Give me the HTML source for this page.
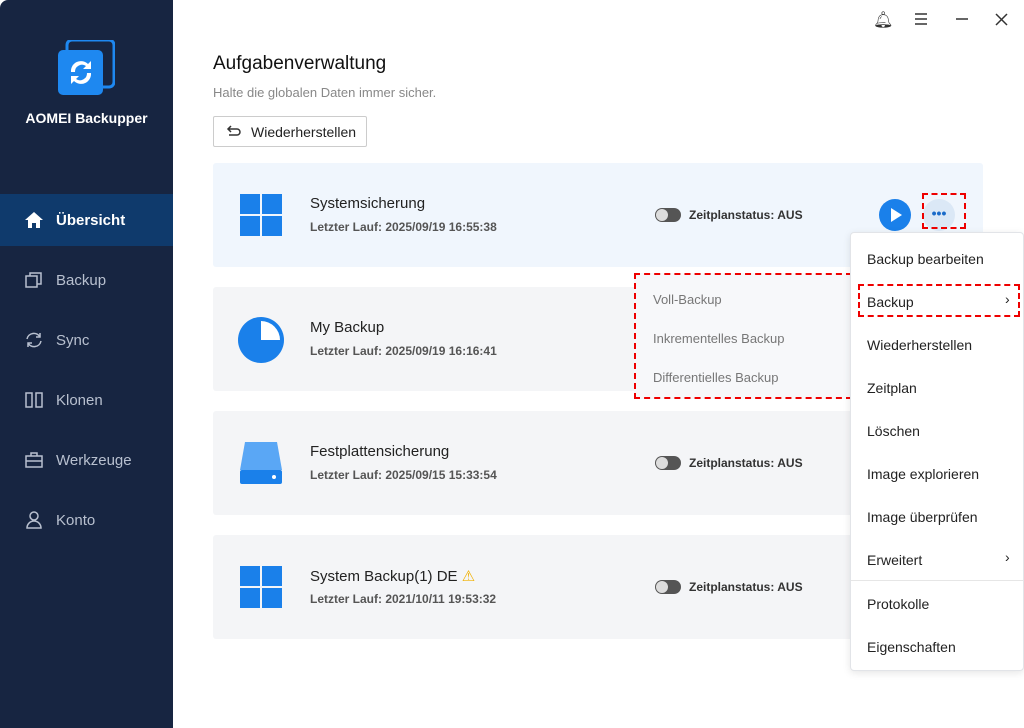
<!DOCTYPE html><html><head><meta charset="utf-8"><style>
*{margin:0;padding:0;box-sizing:border-box}
body{width:1024px;height:728px;background:#fff;font-family:"Liberation Sans",sans-serif;position:relative;overflow:hidden;color:#222}
.sb{position:absolute;left:0;top:0;width:173px;height:728px;background:#172541;border-radius:8px 0 0 0}
.nav{position:absolute;left:0;width:173px;height:52px;color:#b8c0cf;font-size:15px;display:flex;align-items:center;padding-left:24px}
.nav svg{margin-right:12px}
.nav.act{background:#0f3a6c;color:#fff;font-weight:bold}
.a{position:absolute}
.card{position:absolute;left:213px;width:770px;height:104px;background:#f4f5f7;border-radius:3px}
.t{position:absolute;left:97px;top:32px;font-size:15px;color:#222}
.s{position:absolute;left:97px;top:57px;font-size:12px;color:#555;font-weight:bold}
.tg{position:absolute;left:442px;font-size:12px;color:#333;font-weight:bold;display:flex;align-items:center}
.tg i{display:inline-block;width:26px;height:14px;border-radius:7px;background:#555;margin-right:8px;position:relative}
.tg i:after{content:"";position:absolute;left:1px;top:1px;width:12px;height:12px;border-radius:6px;background:#ddd}
.menu{position:absolute;left:850px;top:232px;width:174px;height:439px;background:#fff;border:1px solid #e2e4e8;border-radius:4px;box-shadow:0 2px 8px rgba(0,0,0,.1)}
.mi{position:absolute;left:16px;font-size:14px;color:#222}
.sub{position:absolute;left:634px;top:273px;width:218px;height:126px;background:#f7f8fa;border:2px dashed #e00}
.sub div{position:absolute;left:17px;font-size:13px;color:#777}
</style></head><body>
<div class="sb"></div>
<svg class="a" style="left:57px;top:40px" width="58" height="58"><rect x="10" y="0" width="47" height="47" rx="5" fill="none" stroke="#1e88f0" stroke-width="3"/><rect x="1" y="10" width="45" height="45" rx="5" fill="#1e88f0"/><path d="M14 32a10 10 0 0 1 17-8l3-3v8h-8l3-3a7 7 0 0 0-11 6z M34 33a10 10 0 0 1-17 8l-3 3v-8h8l-3 3a7 7 0 0 0 11-6z" fill="#fff"/></svg>
<div class="a" style="left:0;width:173px;top:110px;text-align:center;color:#fff;font-weight:bold;font-size:14px">AOMEI Backupper</div>
<div class="nav act" style="top:194px"><svg width="20" height="20"><path d="M10 2L1 10h3v8h4v-5h4v5h4v-8h3z" fill="#fff"/></svg>Übersicht</div>
<div class="nav" style="top:254px"><svg width="20" height="20" fill="none" stroke="#b8c0cf" stroke-width="1.5"><rect x="2" y="6" width="11" height="11"/><path d="M6 6V3h11v11h-4"/></svg>Backup</div>
<div class="nav" style="top:314px"><svg width="20" height="20" fill="none" stroke="#b8c0cf" stroke-width="1.5"><path d="M3 9a7 7 0 0 1 13-2M17 11a7 7 0 0 1-13 2M16 3v4h-4M4 17v-4h4"/></svg>Sync</div>
<div class="nav" style="top:374px"><svg width="20" height="20" fill="none" stroke="#b8c0cf" stroke-width="1.5"><rect x="2" y="3" width="6" height="14"/><rect x="12" y="3" width="6" height="14"/></svg>Klonen</div>
<div class="nav" style="top:434px"><svg width="20" height="20" fill="none" stroke="#b8c0cf" stroke-width="1.5"><rect x="2" y="6" width="16" height="11"/><path d="M7 6V3h6v3M2 11h16"/></svg>Werkzeuge</div>
<div class="nav" style="top:494px"><svg width="20" height="20" fill="none" stroke="#b8c0cf" stroke-width="1.5"><circle cx="10" cy="6" r="4"/><path d="M3 18a7 7 0 0 1 14 0z"/></svg>Konto</div>
<div class="a" style="left:873px;top:10px;font-size:16px;color:#333">🔔︎</div>
<svg class="a" style="left:914px;top:13px" width="14" height="12" stroke="#333" stroke-width="1.5"><path d="M1 1h12M1 6h12M1 11h12"/></svg>
<svg class="a" style="left:955px;top:13px" width="14" height="12" stroke="#333" stroke-width="1.5"><path d="M1 6h12"/></svg>
<svg class="a" style="left:995px;top:13px" width="13" height="13" stroke="#333" stroke-width="1.5"><path d="M1 1l11 11M12 1L1 12"/></svg>
<div class="a" style="left:213px;top:53px;font-size:19px;color:#111">Aufgabenverwaltung</div>
<div class="a" style="left:213px;top:85px;font-size:13px;color:#888">Halte die globalen Daten immer sicher.</div>
<div class="a" style="left:213px;top:116px;width:154px;height:31px;border:1px solid #ccc;border-radius:2px;font-size:14px;padding:7px 0 0 37px">Wiederherstellen</div>
<svg class="a" style="left:226px;top:124px" width="16" height="14" fill="none" stroke="#333" stroke-width="1.5"><path d="M5 2L2 5l3 3M2 5h9a3 3 0 0 1 0 6H3"/></svg>
<div class="card" style="top:163px;background:#f0f6fd">
<svg class="a" style="left:27px;top:31px" width="42" height="42" fill="#1a80ea"><rect width="20" height="20"/><rect x="22" width="20" height="20"/><rect y="22" width="20" height="20"/><rect x="22" y="22" width="20" height="20"/></svg>
<div class="t">Systemsicherung</div><div class="s">Letzter Lauf: 2025/09/19 16:55:38</div>
<div class="tg" style="top:45px"><i></i>Zeitplanstatus: AUS</div>
<svg class="a" style="left:666px;top:36px" width="32" height="32"><circle cx="16" cy="16" r="16" fill="#1a80ea"/><path d="M12 9v14l11-7z" fill="#fff"/></svg>
<div class="a" style="left:710px;top:36px;width:32px;height:32px;border-radius:16px;background:#dbe8f6;color:#1a6bc9;text-align:center;font-weight:bold;font-size:14px;line-height:28px">•••</div>
<div class="a" style="left:709px;top:30px;width:44px;height:36px;border:2px dashed #e00"></div>
</div>
<div class="card" style="top:287px">
<svg class="a" style="left:24px;top:29px" width="48" height="48"><circle cx="24" cy="24" r="23" fill="#1a80ea"/><path d="M24 5a19 19 0 0 1 19 19H24z" fill="#fff"/></svg>
<div class="t">My Backup</div><div class="s">Letzter Lauf: 2025/09/19 16:16:41</div></div>
<div class="card" style="top:411px">
<svg class="a" style="left:27px;top:31px" width="42" height="44"><path d="M5 0h32l5 28H0z" fill="#5aa7f5"/><rect y="28" width="42" height="14" rx="2" fill="#1a80ea"/><circle cx="34" cy="35" r="2" fill="#fff"/></svg>
<div class="t">Festplattensicherung</div><div class="s">Letzter Lauf: 2025/09/15 15:33:54</div>
<div class="tg" style="top:45px"><i></i>Zeitplanstatus: AUS</div></div>
<div class="card" style="top:535px">
<svg class="a" style="left:27px;top:31px" width="42" height="42" fill="#1a80ea"><rect width="20" height="20"/><rect x="22" width="20" height="20"/><rect y="22" width="20" height="20"/><rect x="22" y="22" width="20" height="20"/></svg>
<div class="t">System Backup(1) DE <span style="color:#f0b000">⚠</span></div><div class="s">Letzter Lauf: 2021/10/11 19:53:32</div>
<div class="tg" style="top:45px"><i></i>Zeitplanstatus: AUS</div></div>
<div class="sub"><div style="top:17px">Voll-Backup</div><div style="top:56px">Inkrementelles Backup</div><div style="top:95px">Differentielles Backup</div></div>
<div class="menu">
<div class="mi" style="top:18px">Backup bearbeiten</div>
<div class="mi" style="top:61px">Backup</div><div class="mi" style="top:58px;left:154px">›</div>
<div class="a" style="left:7px;top:51px;width:162px;height:33px;border:2px dashed #e00"></div>
<div class="mi" style="top:104px">Wiederherstellen</div>
<div class="mi" style="top:147px">Zeitplan</div>
<div class="mi" style="top:190px">Löschen</div>
<div class="mi" style="top:233px">Image explorieren</div>
<div class="mi" style="top:276px">Image überprüfen</div>
<div class="mi" style="top:319px">Erweitert</div><div class="mi" style="top:316px;left:154px">›</div>
<div class="a" style="left:0;top:347px;width:172px;height:1px;background:#e6e6e6"></div>
<div class="mi" style="top:363px">Protokolle</div>
<div class="mi" style="top:406px">Eigenschaften</div>
</div>
</body></html>
